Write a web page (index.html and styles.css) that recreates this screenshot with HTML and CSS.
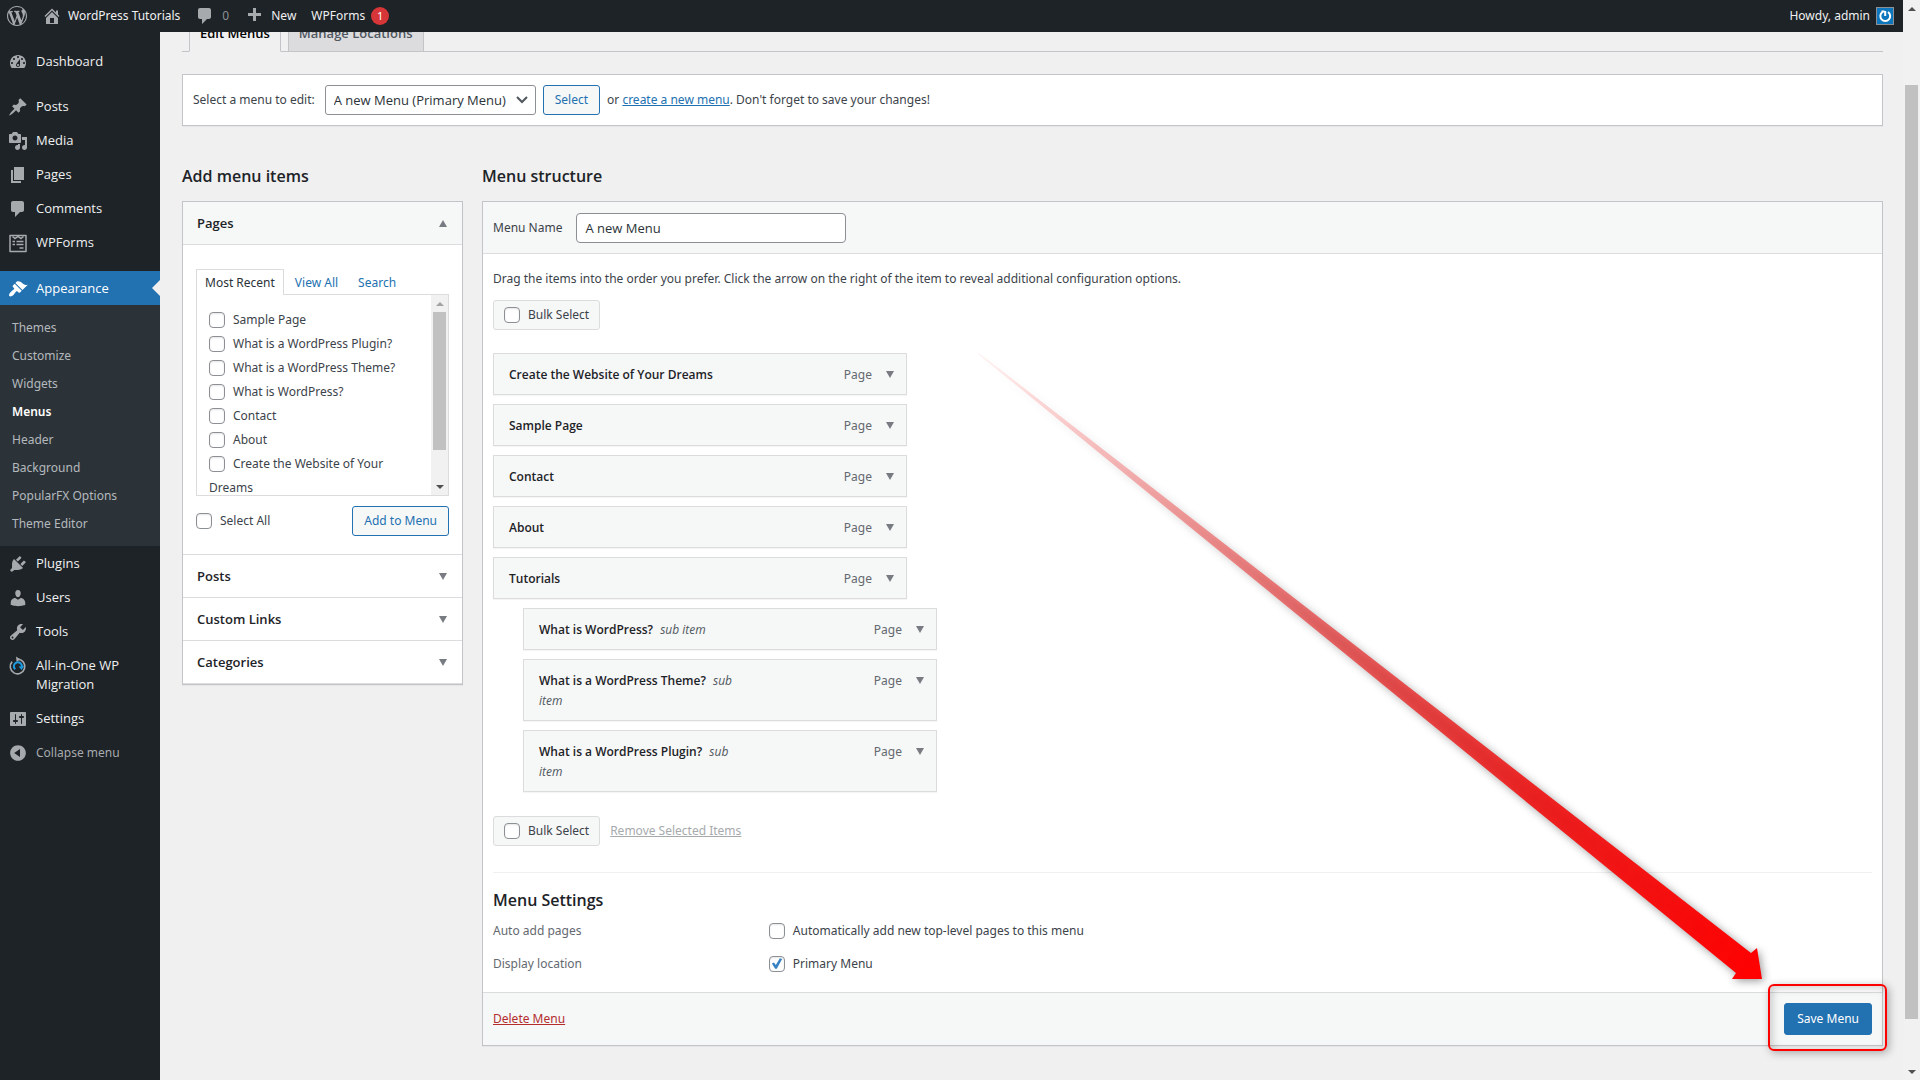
FILE: index.html
```html
<!DOCTYPE html>
<html lang="en">
<head>
<meta charset="utf-8">
<title>Menus - WordPress Tutorials</title>
<link rel="stylesheet" href="styles.css">
</head>
<body>
<div class="app">
  <div class="frame">
    <header class="adminbar">
      <a class="bar-item bar-logo" href="#" aria-label="About WordPress"><svg class="icon" viewBox="0 0 20 20"><path d="M20 10c0-5.51-4.49-10-10-10C4.48 0 0 4.49 0 10c0 5.52 4.48 10 10 10 5.51 0 10-4.48 10-10zM7.78 15.37L4.37 6.22c.55-.02 1.17-.08 1.17-.08.5-.06.44-1.13-.06-1.11 0 0-1.45.11-2.37.11-.18 0-.37 0-.58-.01C4.12 2.69 6.87 1.11 10 1.11c2.33 0 4.45.87 6.05 2.34-.68-.11-1.65.39-1.65 1.58 0 .74.45 1.36.9 2.1.35.61.55 1.36.55 2.46 0 1.49-1.4 5-1.4 5l-3.03-8.37c.54-.02.82-.17.82-.17.5-.05.44-1.25-.06-1.22 0 0-1.44.12-2.38.12-.87 0-2.33-.12-2.33-.12-.5-.03-.56 1.2-.06 1.22l.92.08 1.26 3.41zM17.41 10c.24-.64.74-1.87.43-4.25.7 1.29 1.05 2.71 1.05 4.25 0 3.29-1.73 6.24-4.4 7.78.97-2.59 1.94-5.2 2.92-7.78zM6.1 18.09C3.12 16.65 1.11 13.53 1.11 10c0-1.3.23-2.48.72-3.59C3.25 10.3 4.67 14.2 6.1 18.09zm4.03-6.63l2.58 6.98c-.86.29-1.76.45-2.71.45-.79 0-1.57-.11-2.29-.33.81-2.38 1.62-4.74 2.42-7.1z"/></svg></a>
      <a class="bar-item bar-home" href="#"><svg class="icon" viewBox="0 0 20 20"><path d="M16 8.5l1.53 1.53-1.06 1.06L10 4.6l-6.47 6.49-1.06-1.06L10 2.5l4 4v-2h2v4zm-6-2.46l6 5.99V18H4v-5.97zM12 17v-5H8v5h4z"/></svg>WordPress Tutorials</a>
      <a class="bar-item bar-comments" href="#"><svg class="icon" viewBox="0 0 20 20"><path d="M5 2h9c1.1 0 2 .9 2 2v7c0 1.1-.9 2-2 2h-2l-5 5v-5H5c-1.1 0-2-.9-2-2V4c0-1.1.9-2 2-2z"/></svg>0</a>
      <a class="bar-item bar-new" href="#"><svg class="icon" viewBox="0 0 20 20"><path d="M17 7v3h-5v5H9v-5H4V7h5V2h3v5h5z"/></svg>New</a>
      <a class="bar-item bar-forms" href="#">WPForms<span class="badge">1</span></a>
      <a class="bar-item bar-user" href="#">Howdy, admin<svg class="avatar" viewBox="0 0 18 18"><rect width="18" height="18" fill="#8c8f94"/><rect x="1" y="1" width="16" height="16" fill="#0d76bd"/><path d="M6.5 5A4.9 4.9 0 1 0 12 5" fill="none" stroke="#fff" stroke-width="2"/><path d="M9.2 4v5M5.500 4.500h3" fill="none" stroke="#fff" stroke-width="2"/></svg></a>
    </header>

    <div class="workspace">
      <nav class="sidebar">
        <a class="nav-item" href="#"><svg class="icon" viewBox="0 0 20 20"><path fill-rule="evenodd" d="M3.76 16h12.48c1.1-1.37 1.76-3.11 1.76-5 0-4.42-3.58-8-8-8s-8 3.58-8 8c0 1.89.66 3.63 1.76 5zM10 4c.55 0 1 .45 1 1s-.45 1-1 1-1-.45-1-1 .45-1 1-1zM6 6c.55 0 1 .45 1 1s-.45 1-1 1-1-.45-1-1 .45-1 1-1zm8 0c.55 0 1 .45 1 1s-.45 1-1 1-1-.45-1-1 .45-1 1-1zm-5.37 5.55L12 7v6c0 1.1-.9 2-2 2s-2-.9-2-2c0-.57.24-1.08.63-1.45zM4 10c.55 0 1 .45 1 1s-.45 1-1 1-1-.45-1-1 .45-1 1-1zm12 0c.55 0 1 .45 1 1s-.45 1-1 1-1-.45-1-1 .45-1 1-1zm-5 3c0-.55-.45-1-1-1s-1 .45-1 1 .45 1 1 1 1-.45 1-1z"/></svg>Dashboard</a>
        <div class="nav-group">
          <a class="nav-item" href="#"><svg class="icon" viewBox="0 0 20 20"><path d="M10.440 3.020l1.820-1.820 6.360 6.350-1.830 1.820c-1.050-.68-2.480-.57-3.410.36l-.75.75c-.92.93-1.040 2.350-.35 3.410l-1.830 1.820-2.410-2.410-2.800 2.790c-.42.42-3.380 2.710-3.800 2.290s1.860-3.390 2.280-3.810l2.790-2.790L4.100 9.360l1.830-1.820c1.050.69 2.480.57 3.400-.36l.75-.75c.93-.92 1.050-2.350.36-3.410z"/></svg>Posts</a>
          <a class="nav-item" href="#"><svg class="icon" viewBox="0 0 20 20"><path d="M13 11V4c0-.55-.45-1-1-1h-1.670L9 1H5L3.670 3H2c-.55 0-1 .45-1 1v7c0 .55.45 1 1 1h10c.55 0 1-.45 1-1zM7 4.500c1.380 0 2.500 1.120 2.500 2.500S8.380 9.500 7 9.500 4.500 8.380 4.500 7 5.620 4.500 7 4.500zM14 6h5v10.500c0 1.380-1.120 2.500-2.500 2.500S14 17.880 14 16.500s1.120-2.500 2.500-2.500c.17 0 .34.02.5.05V9h-3V6zm-4 8.050V13h2v3.500c0 1.380-1.120 2.500-2.500 2.500S7 17.880 7 16.500 8.120 14 9.500 14c.17 0 .34.02.5.05z"/></svg>Media</a>
          <a class="nav-item" href="#"><svg class="icon" viewBox="0 0 20 20"><path d="M6 15V2h10v13H6zm-1 1h8v2H3V5h2v11z"/></svg>Pages</a>
          <a class="nav-item" href="#"><svg class="icon" viewBox="0 0 20 20"><path d="M5 2h9c1.1 0 2 .9 2 2v7c0 1.1-.9 2-2 2h-2l-5 5v-5H5c-1.1 0-2-.9-2-2V4c0-1.1.9-2 2-2z"/></svg>Comments</a>
          <a class="nav-item" href="#"><svg class="icon" viewBox="0 0 20 20"><path d="M2 2.500h16v16H2z" fill="none" stroke="currentColor" stroke-width="1.500" stroke-linejoin="round"/><path d="M4.500 3.500L7 5.500 10 3.500l3 2 2.500-2M4.500 8.500h2.500M8.500 8.500h7M4.500 11.500h2.500M8.500 11.500h7M11.500 15h4" fill="none" stroke="currentColor" stroke-width="1.500"/></svg>WPForms</a>
        </div>
        <a class="nav-item current" href="#"><svg class="icon" viewBox="0 0 20 20"><path d="M14.480 11.060L7.410 3.990l1.500-1.500c.5-.56 2.300-.47 3.510.32 1.210.8 1.430 1.280 2.910 2.100 1.180.64 2.450 1.260 4.450.85zm-.71.71L6.700 4.700 4.930 6.470c-.39.39-.39 1.020 0 1.410l1.060 1.060c.39.39.39 1.030 0 1.420-.6.6-1.430 1.110-2.210 1.690-.35.26-.7.53-1.010.84C1.430 14.230.4 16.080 1.400 17.070c.99 1 2.840-.03 4.180-1.360.31-.31.58-.66.85-1.020.57-.78 1.080-1.610 1.690-2.210.39-.39 1.020-.39 1.410 0l1.060 1.060c.39.39 1.020.39 1.410 0z"/></svg>Appearance</a>
        <div class="subnav">
          <a href="#">Themes</a>
          <a href="#">Customize</a>
          <a href="#">Widgets</a>
          <a class="active" href="#">Menus</a>
          <a href="#">Header</a>
          <a href="#">Background</a>
          <a href="#">PopularFX Options</a>
          <a href="#">Theme Editor</a>
        </div>
        <a class="nav-item" href="#"><svg class="icon" viewBox="0 0 20 20"><path d="M13.110 4.360L9.870 7.600 8 5.730l3.240-3.240c.35-.34 1.050-.2 1.560.32.52.51.66 1.210.31 1.550zm-8 1.770l.91-1.120 9.010 9.010-1.190.84c-.71.71-2.630 1.160-3.820 1.160H6.140L4.900 17.260c-.59.59-1.540.59-2.120 0-.59-.58-.59-1.530 0-2.120l1.240-1.240v-3.880c0-1.130.4-3.190 1.090-3.890zm7.260 3.970l3.240-3.240c.34-.35 1.040-.21 1.550.31.52.51.66 1.210.31 1.550l-3.240 3.250z"/></svg>Plugins</a>
        <a class="nav-item" href="#"><svg class="icon" viewBox="0 0 20 20"><path d="M10 9.250c-2.270 0-2.730-3.440-2.730-3.440C7 4.020 7.820 2 9.970 2c2.160 0 2.980 2.020 2.710 3.810 0 0-.41 3.440-2.680 3.440zm0 2.570L12.720 10c2.390 0 4.520 2.330 4.520 4.530v2.490s-3.650 1.130-7.240 1.130c-3.650 0-7.240-1.130-7.240-1.130v-2.490c0-2.250 1.940-4.480 4.470-4.480z"/></svg>Users</a>
        <a class="nav-item" href="#"><svg class="icon" viewBox="0 0 20 20"><path d="M16.680 9.770c-1.340 1.340-3.300 1.670-4.950.99l-5.410 6.520c-.99.99-2.590.99-3.580 0s-.99-2.590 0-3.570l6.520-5.420c-.68-1.650-.35-3.610.99-4.950 1.280-1.280 3.120-1.620 4.720-1.060l-2.890 2.890 2.820 2.820 2.860-2.870c.53 1.580.18 3.390-1.080 4.650zM3.810 16.210c.4.39 1.040.39 1.430 0 .4-.4.4-1.040 0-1.430-.39-.4-1.030-.4-1.430 0-.39.39-.39 1.030 0 1.430z"/></svg>Tools</a>
        <a class="nav-item" href="#"><svg class="icon" viewBox="0 0 20 20"><path d="M4.100 5.600A7.300 7.300 0 1 0 10 3.200" fill="none" stroke="currentColor" stroke-width="1.600"/><path d="M8 .6l4.200 2.600L8.600 6z"/><path d="M7.200 13.200A4 4 0 1 1 13.800 11" fill="none" stroke="#1e9be0" stroke-width="2"/><path d="M10.600 10.500l5.400-.6-2.300 4z" fill="#1e9be0"/></svg>All-in-One WP Migration</a>
        <a class="nav-item" href="#"><svg class="icon" viewBox="0 0 20 20"><path d="M18 16V4c0-.55-.45-1-1-1H3c-.55 0-1 .45-1 1v12c0 .55.45 1 1 1h14c.55 0 1-.45 1-1zM8 11h1c.55 0 1 .45 1 1s-.45 1-1 1H8v1.500c0 .28-.22.5-.5.5s-.5-.22-.5-.5V13H6c-.55 0-1-.45-1-1s.45-1 1-1h1V5.500c0-.28.22-.5.5-.5s.5.22.5.5V11zm5-2h-1c-.55 0-1-.45-1-1s.45-1 1-1h1V5.500c0-.28.22-.5.5-.5s.5.22.5.5V7h1c.55 0 1 .45 1 1s-.45 1-1 1h-1v5.500c0 .28-.22.5-.5.5s-.5-.22-.5-.5V9z"/></svg>Settings</a>
        <button class="nav-item collapse" type="button"><svg class="icon" viewBox="0 0 20 20"><path fill-rule="evenodd" d="M10 2.160c4.330 0 7.840 3.510 7.840 7.840s-3.510 7.840-7.840 7.840S2.160 14.330 2.160 10 5.670 2.160 10 2.160zm2 11.720V6.120L6.180 9.970z"/></svg>Collapse menu</button>
      </nav>

      <main class="content">
        <nav class="tabs">
          <a class="tab tab-active" href="#">Edit Menus</a>
          <a class="tab" href="#">Manage Locations</a>
        </nav>

        <form class="picker">
          <label for="menu">Select a menu to edit:</label>
          <span class="select-wrap">
            <select id="menu"><option>A new Menu (Primary Menu)</option></select>
            <svg class="chevron" viewBox="0 0 12 8"><path d="M1 1l5 5 5-5" fill="none" stroke="#50575e" stroke-width="2"/></svg>
          </span>
          <button class="button" type="button">Select</button>
          <span>or <a href="#">create a new menu</a>. Don't forget to save your changes!</span>
        </form>

        <div class="columns">
          <section>
            <h2>Add menu items</h2>
            <div class="accordion">
              <button class="acc-head acc-open" type="button">Pages<i class="tri tri-up"></i></button>
              <div class="acc-body">
                <div class="subtabs">
                  <a class="subtab subtab-active" href="#">Most Recent</a>
                  <a class="subtab" href="#">View All</a>
                  <a class="subtab" href="#">Search</a>
                </div>
                <div class="page-list">
                  <div class="page-rows">
                    <label><input type="checkbox">Sample Page</label>
                    <label><input type="checkbox">What is a WordPress Plugin?</label>
                    <label><input type="checkbox">What is a WordPress Theme?</label>
                    <label><input type="checkbox">What is WordPress?</label>
                    <label><input type="checkbox">Contact</label>
                    <label><input type="checkbox">About</label>
                    <label><input type="checkbox">Create the Website of Your Dreams</label>
                  </div>
                  <div class="scrollbar list-scroll"><i class="sb-arrow sb-up sb-off"></i><i class="sb-thumb"></i><i class="sb-rest"></i><i class="sb-arrow sb-down"></i></div>
                </div>
                <div class="acc-actions">
                  <label class="check"><input type="checkbox">Select All</label>
                  <button class="button" type="button">Add to Menu</button>
                </div>
              </div>
              <button class="acc-head" type="button">Posts<i class="tri"></i></button>
              <button class="acc-head" type="button">Custom Links<i class="tri"></i></button>
              <button class="acc-head" type="button">Categories<i class="tri"></i></button>
            </div>
          </section>

          <section>
            <h2>Menu structure</h2>
            <form class="panel">
              <div class="panel-head">
                <label for="name">Menu Name</label>
                <input class="text" id="name" type="text" value="A new Menu">
              </div>
              <div class="panel-body">
                <p>Drag the items into the order you prefer. Click the arrow on the right of the item to reveal additional configuration options.</p>
                <div class="bulk bulk-top"><label class="check bulk-box"><input type="checkbox">Bulk Select</label></div>
                <ul class="items">
                  <li><span class="title">Create the Website of Your Dreams</span><span class="type">Page</span><i class="tri"></i></li>
                  <li><span class="title">Sample Page</span><span class="type">Page</span><i class="tri"></i></li>
                  <li><span class="title">Contact</span><span class="type">Page</span><i class="tri"></i></li>
                  <li><span class="title">About</span><span class="type">Page</span><i class="tri"></i></li>
                  <li><span class="title">Tutorials</span><span class="type">Page</span><i class="tri"></i></li>
                  <li class="sub"><span class="title">What is WordPress? <em>sub item</em></span><span class="type">Page</span><i class="tri"></i></li>
                  <li class="sub"><span class="title">What is a WordPress Theme? <em>sub item</em></span><span class="type">Page</span><i class="tri"></i></li>
                  <li class="sub"><span class="title">What is a WordPress Plugin? <em>sub item</em></span><span class="type">Page</span><i class="tri"></i></li>
                </ul>
                <div class="bulk"><label class="check bulk-box"><input type="checkbox">Bulk Select</label><a class="remove" href="#">Remove Selected Items</a></div>
                <div class="settings">
                  <h2>Menu Settings</h2>
                  <div class="setting"><span>Auto add pages</span><label class="check"><input type="checkbox">Automatically add new top-level pages to this menu</label></div>
                  <div class="setting"><span>Display location</span><label class="check"><input type="checkbox" checked>Primary Menu</label></div>
                </div>
              </div>
              <div class="panel-foot">
                <a class="delete" href="#">Delete Menu</a>
                <button class="button primary" type="button">Save Menu</button>
              </div>
              <svg class="pointer" viewBox="0 0 800 650">
                <defs>
                  <linearGradient id="fade" gradientUnits="userSpaceOnUse" x1="-20" y1="-10" x2="792" y2="639">
                    <stop offset="0" stop-color="#f00" stop-opacity="0"/>
                    <stop offset=".47" stop-color="#e81c1c" stop-opacity=".64"/>
                    <stop offset=".72" stop-color="#f01010" stop-opacity=".9"/>
                    <stop offset="1" stop-color="#f00"/>
                  </linearGradient>
                </defs>
                <path d="M9 13L781 613L787 608L792 639L762 639L766 633L8 14Z" fill="url(#fade)"/>
              </svg>
              <span class="highlight"></span>
            </form>
          </section>
        </div>
      </main>
    </div>
  </div>
  <div class="scrollbar page-scroll"><i class="sb-arrow sb-up"></i><i class="sb-lead"></i><i class="sb-thumb"></i><i class="sb-rest"></i><i class="sb-arrow sb-down"></i></div>
</div>
</body>
</html>
```
FILE: styles.css
```css
* { box-sizing: border-box; }
body {
  margin: 0;
  background: #f0f0f1;
  color: #3c434a;
  font: 12px/20px "Noto Sans", "Open Sans", sans-serif;
}
a { color: #2271b1; }
button, input, select { font: inherit; color: inherit; }
h2 { margin: 0; color: #1d2327; font: 600 16px/24px "Open Sans", sans-serif; }
p { margin: 0; }

.app { display: flex; height: 100vh; overflow: hidden; }
.frame { flex: 1; min-width: 0; display: flex; flex-direction: column; }
.icon { width: 20px; height: 20px; flex: none; fill: currentColor; color: #a7aaad; }

/* Admin bar */
.adminbar {
  display: flex;
  align-items: center;
  flex: none;
  height: 32px;
  padding: 0 9px 0 7px;
  background: #1d2327;
  position: relative;
  z-index: 1;
}
.bar-item { display: flex; align-items: center; gap: 6px; color: #f0f0f1; text-decoration: none; }
.bar-home { margin-left: 15px; }
.bar-comments { gap: 7px; margin-left: 15px; color: #8c8f94; }
.bar-new { gap: 7px; margin-left: 15px; }
.bar-forms { margin-left: 15px; }
.bar-user { margin-left: auto; }
.badge {
  width: 18px;
  height: 18px;
  border-radius: 50%;
  background: #d63638;
  color: #fff;
  font-size: 11px;
  line-height: 18px;
  text-align: center;
}
.avatar { width: 18px; height: 18px; }

/* Sidebar */
.workspace { flex: 1; display: flex; min-height: 0; }
.sidebar { width: 160px; flex: none; padding-top: 12px; background: #1d2327; }
.nav-item {
  display: flex;
  align-items: flex-start;
  gap: 8px;
  width: 100%;
  padding: 8px 10px 7px 8px;
  border: 0;
  background: none;
  color: #f0f0f1;
  font-family: "Open Sans", sans-serif;
  font-size: 13px;
  line-height: 19px;
  text-align: left;
  text-decoration: none;
}
.nav-item .icon { margin-bottom: -1px; }
.nav-group { margin: 11px 0 12px; }
.current { position: relative; background: #2271b1; color: #fff; }
.current .icon { color: #fff; }
.current::after {
  content: "";
  position: absolute;
  right: 0;
  top: 9px;
  border: 8px solid transparent;
  border-left: 0;
  border-right-color: #f0f0f1;
}
.subnav { padding: 9px 0 8px; background: #2c3338; }
.subnav a { display: block; padding: 4px 12px; color: #b4b9be; text-decoration: none; }
.subnav .active { color: #fff; font-weight: 600; }
.nav-item.collapse { color: #a7aaad; font-family: inherit; font-size: 12px; }

/* Content */
.content { flex: 1; min-width: 0; overflow: hidden; padding: 0 20px 0 22px; }
.tabs { display: flex; gap: 7px; margin-top: -18px; padding-left: 7px; border-bottom: 1px solid #c3c4c7; }
.tab {
  padding: 6px 10px;
  border: 1px solid #c3c4c7;
  border-bottom: 0;
  background: #dcdcde;
  color: #50575e;
  font: 600 13px/24px "Open Sans", sans-serif;
  text-decoration: none;
}
.tab-active { margin-bottom: -1px; border-bottom: 1px solid #f0f0f1; background: #f0f0f1; color: #000; }

.picker {
  display: flex;
  align-items: center;
  gap: 7px;
  margin: 22px 0 38px;
  padding: 10px;
  border: 1px solid #c3c4c7;
  background: #fff;
  box-shadow: 0 1px 1px rgba(0, 0, 0, .04);
}
.picker label { margin-right: 3px; }
.select-wrap { position: relative; }
.select-wrap select {
  display: block;
  width: 211px;
  height: 30px;
  padding: 0 24px 0 8px;
  border: 1px solid #8c8f94;
  border-radius: 3px;
  background: #fff;
  color: #2c3338;
  font-family: "Open Sans", sans-serif;
  font-size: 13px;
  appearance: none;
}
.chevron { position: absolute; right: 8px; top: 11px; width: 12px; height: 8px; }
.button {
  height: 30px;
  padding: 0 11px;
  border: 1px solid #2271b1;
  border-radius: 3px;
  background: #f6f7f7;
  color: #2271b1;
}
.primary { height: 32px; padding: 0 12px; background: #2271b1; color: #fff; }

.columns { display: grid; grid-template-columns: 281px 1fr; gap: 19px; align-items: start; }
.columns > section > h2 { margin-bottom: 13px; }

input[type="checkbox"] {
  appearance: none;
  flex: none;
  width: 16px;
  height: 16px;
  margin: 0;
  border: 1px solid #8c8f94;
  border-radius: 4px;
  background: #fff;
  box-shadow: inset 0 1px 2px rgba(0, 0, 0, .1);
}
input[type="checkbox"]:checked::before {
  content: "";
  display: block;
  width: 14px;
  height: 14px;
  background: #3582c4;
  clip-path: polygon(15% 50%, 30% 42%, 43% 60%, 72% 12%, 88% 18%, 50% 88%, 38% 88%);
}
.check { display: flex; align-items: center; gap: 8px; }

.tri { width: 0; height: 0; border: 4px solid transparent; border-top: 7px solid #787c82; border-bottom: 0; }
.tri-up { border-top: 0; border-bottom: 7px solid #787c82; }

/* Accordion */
.accordion { border: 1px solid #c3c4c7; background: #fff; box-shadow: 0 1px 1px rgba(0, 0, 0, .04); }
.acc-head {
  display: flex;
  align-items: center;
  justify-content: space-between;
  width: 100%;
  height: 43px;
  padding: 0 15px 0 14px;
  border: 0;
  border-bottom: 1px solid #dcdcde;
  background: #fff;
  color: #1d2327;
  font: 600 13px/20px "Open Sans", sans-serif;
}
.acc-open { background: #f6f7f7; }
.acc-body { padding: 24px 13px 18px; border-bottom: 1px solid #dcdcde; }
.subtabs { display: flex; gap: 2px; }
.subtab { padding: 3px 8px 2px; border: 1px solid transparent; border-bottom: 0; line-height: 19px; text-decoration: none; }
.subtab-active { position: relative; margin-bottom: -1px; padding-bottom: 3px; border-color: #dcdcde; background: #fff; color: #2c3338; }
.page-list { display: flex; height: 202px; border: 1px solid #dcdcde; overflow: hidden; }
.page-rows { flex: 1; padding: 13px 12px 0; line-height: 24px; }
.page-rows label { display: block; }
.page-rows input { margin-right: 8px; vertical-align: -4px; }
.acc-actions { display: flex; align-items: center; justify-content: space-between; margin-top: 10px; }

/* Menu structure panel */
.panel { position: relative; border: 1px solid #c3c4c7; background: #fff; box-shadow: 0 1px 1px rgba(0, 0, 0, .04); }
.panel-head {
  display: flex;
  align-items: center;
  gap: 14px;
  padding: 11px 10px 10px;
  border-bottom: 1px solid #dcdcde;
  background: #f6f7f7;
}
.text {
  width: 270px;
  height: 30px;
  padding: 0 8px;
  border: 1px solid #8c8f94;
  border-radius: 4px;
  background: #fff;
  color: #2c3338;
  font-family: "Open Sans", sans-serif;
  font-size: 13px;
}
.panel-body { padding: 15px 10px 12px; }
.bulk { display: flex; align-items: center; gap: 10px; }
.bulk-top { margin-top: 11px; }
.bulk-box { height: 30px; padding: 0 10px; border: 1px solid #dcdcde; border-radius: 3px; background: #f6f7f7; }
.remove { color: #a7aaad; }
.items { margin: 23px 0 24px; padding: 0; list-style: none; display: flex; flex-direction: column; gap: 9px; }
.items li {
  display: flex;
  align-items: flex-start;
  width: 414px;
  padding: 11px 12px 9px 15px;
  border: 1px solid #dcdcde;
  background: #f6f7f7;
  box-shadow: 0 1px 1px rgba(0, 0, 0, .04);
}
.items .sub { margin-left: 30px; }
.title { max-width: 214px; margin-right: auto; color: #1d2327; font-family: "Open Sans", sans-serif; font-weight: 600; }
.title em { margin-left: 4px; color: #50575e; font-weight: 400; }
.type { margin-right: 14px; color: #646970; }
.items .tri { margin-top: 6px; }
.settings { margin-top: 26px; padding-top: 15px; border-top: 1px solid #f0f0f1; }
.settings h2 { margin-bottom: 2px; }
.setting { display: grid; grid-template-columns: 20% 1fr; align-items: center; height: 33px; color: #646970; }
.setting label { color: #3c434a; }
.panel-foot {
  display: flex;
  align-items: center;
  justify-content: space-between;
  padding: 10px;
  border-top: 1px solid #dcdcde;
  background: #f6f7f7;
}
.delete { color: #b32d2e; }

/* Annotations drawn over the panel */
.pointer {
  position: absolute;
  right: 112px;
  bottom: 55px;
  width: 800px;
  height: 650px;
  filter: drop-shadow(2px 2px 4px rgba(0, 0, 0, .4));
  pointer-events: none;
}
.highlight {
  position: absolute;
  right: -5px;
  bottom: -6px;
  width: 119px;
  height: 67px;
  border: 2px solid #f00;
  border-radius: 6px;
  box-shadow: 2px 2px 8px rgba(0, 0, 0, .3), inset 2px 2px 8px rgba(0, 0, 0, .2);
  pointer-events: none;
}

/* Scroll bars */
.scrollbar { display: flex; flex-direction: column; align-items: center; width: 17px; flex: none; background: #f1f1f1; }
.sb-arrow { display: flex; align-items: center; justify-content: center; width: 17px; height: 17px; flex: none; }
.sb-arrow::before { content: ""; border: 4px solid transparent; border-top: 0; border-bottom-color: #505050; }
.sb-down::before { border-top: 4px solid #505050; border-bottom: 0; }
.sb-off::before { border-bottom-color: #a3a3a3; }
.sb-thumb { width: 13px; background: #c1c1c1; }
.list-scroll .sb-thumb { flex: 138; }
.list-scroll .sb-rest { flex: 28; }
.page-scroll .sb-lead { flex: 68; }
.page-scroll .sb-thumb { flex: 934; }
.page-scroll .sb-rest { flex: 44; }
```
